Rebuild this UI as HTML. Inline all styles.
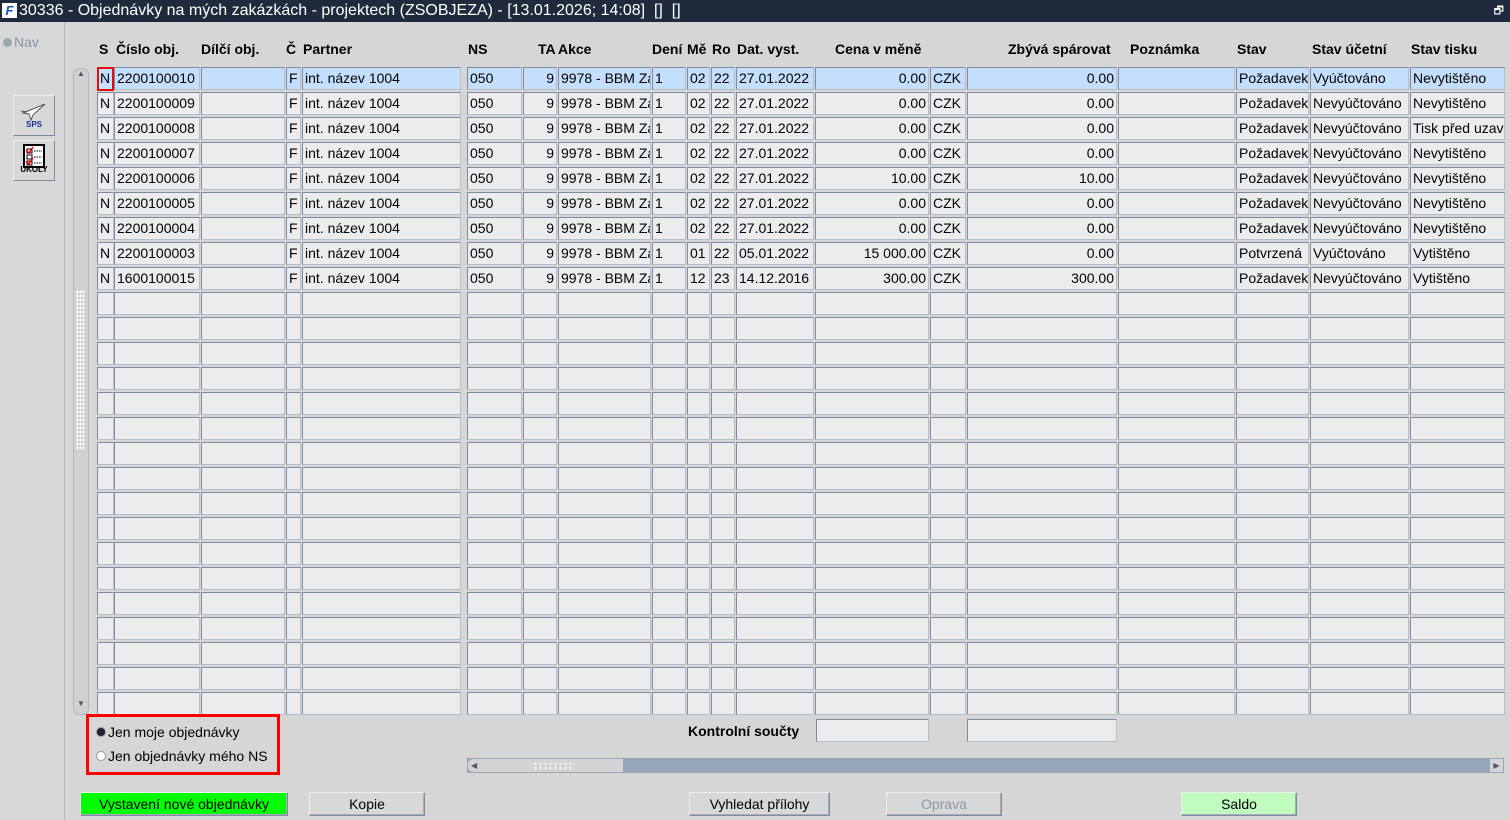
<!DOCTYPE html>
<html><head><meta charset="utf-8"><style>
*{box-sizing:border-box;margin:0;padding:0}
body{width:1510px;height:820px;overflow:hidden;background:#d6d6d6;font-family:"Liberation Sans",Arial,sans-serif;font-size:14px;color:#000;position:relative}
.abs{position:absolute}
#title{left:0;top:0;width:1510px;height:22px;background:#1f2b3c;color:#fff;font-size:16px;line-height:22px;padding-left:19px;white-space:nowrap}
#left{left:0;top:22px;width:65px;height:798px;background:#d8d8d8;border-right:1px solid #b8b8b8}
.c{position:absolute;height:23px;background:#ececec;border:1px solid;border-color:#7d8ca2 #b4bfcd #b4bfcd #7d8ca2;line-height:21px;padding:0 2px;white-space:nowrap;overflow:hidden;font-size:14px}
.sel{background:#c3dffb}
.r{text-align:right}
.h{position:absolute;top:41px;font-weight:bold;font-size:14px;white-space:nowrap}
.btn{position:absolute;top:792px;height:24px;border:1px solid;border-color:#eee #7d8ca2 #7d8ca2 #eee;background:#d8d8d8;text-align:center;line-height:22px;font-size:14px;box-shadow:inset -1px -1px 0 #aab}
</style></head><body>
<div id="title" class="abs">30336 - Objednávky na mých zakázkách - projektech (ZSOBJEZA) - [13.01.2026; 14:08]&nbsp; []&nbsp; []</div>
<div class="abs" style="left:2px;top:3px;width:15px;height:15px;background:#fff;color:#1553c8;font-weight:bold;font-size:13px;line-height:15px;text-align:center;font-style:italic">F</div>
<div class="abs" style="right:6px;top:2px;color:#fff;font-size:11px">🗗</div>
<div id="left" class="abs"></div>
<div class="abs" style="left:3px;top:34px;color:#8a94a6;font-size:14px"><span style="display:inline-block;width:9px;height:9px;border-radius:50%;background:#9aa;margin-right:2px"></span>Nav</div>
<div class="abs" style="left:13px;top:95px;width:42px;height:41px;border:1px solid;border-color:#eee #7d8ca2 #7d8ca2 #eee;text-align:center">
<svg width="30" height="20" viewBox="0 0 30 20" style="margin-top:5px"><path d="M4 12 L26 3 L14 14 L12 19 L10 13 Z" fill="#fff" stroke="#555"/><path d="M2 10 L8 11" stroke="#555"/></svg>
<div style="font-size:8px;color:#1a2a9a;font-weight:bold;margin-top:-4px">SPS</div></div>
<div class="abs" style="left:13px;top:140px;width:42px;height:41px;border:1px solid;border-color:#eee #7d8ca2 #7d8ca2 #eee;text-align:center">
<svg width="22" height="24" viewBox="0 0 22 24" style="margin-top:3px"><rect x="1" y="1" width="20" height="22" fill="#fff" stroke="#000" stroke-width="2"/><rect x="4" y="5" width="5" height="4" fill="none" stroke="#000"/><rect x="4" y="11" width="5" height="4" fill="none" stroke="#000"/><rect x="4" y="17" width="5" height="4" fill="none" stroke="#000"/><path d="M3 6 L6 9 L10 3 M3 17 L6 20 L10 14" stroke="#e00" fill="none" stroke-width="1.5"/><path d="M11 7h8M11 13h8M11 19h8" stroke="#000" stroke-dasharray="1.5 1"/></svg>
<div style="font-size:8px;font-weight:bold;margin-top:-6px">ÚKOLY</div></div>
<!-- vertical scrollbar -->
<div class="abs" style="left:73px;top:68px;width:16px;height:647px;background:#d0d0d0;border:1px solid #b0b8c4;border-radius:6px"></div>
<div class="abs" style="left:74px;top:69px;width:14px;height:14px;font-size:8px;color:#556;text-align:center">▲</div>
<div class="abs" style="left:74px;top:699px;width:14px;height:14px;font-size:8px;color:#556;text-align:center">▼</div>
<div class="abs" style="left:76px;top:290px;width:9px;height:160px;background-image:radial-gradient(#fff 1px,transparent 1.2px);background-size:3px 4px"></div>
<div class="h" style="left:99px">S</div><div class="h" style="left:116px">Číslo obj.</div><div class="h" style="left:201px">Dílčí obj.</div><div class="h" style="left:286px">Č</div><div class="h" style="left:303px">Partner</div><div class="h" style="left:468px">NS</div><div class="h" style="left:538px">TA</div><div class="h" style="left:558px">Akce</div><div class="h" style="left:652px">Dení</div><div class="h" style="left:687px">Mě</div><div class="h" style="left:712px">Ro</div><div class="h" style="left:737px">Dat. vyst.</div><div class="h" style="left:835px">Cena v měně</div><div class="h" style="left:1008px">Zbývá spárovat</div><div class="h" style="left:1130px">Poznámka</div><div class="h" style="left:1237px">Stav</div><div class="h" style="left:1312px">Stav účetní</div><div class="h" style="left:1411px">Stav tisku</div>
<div id="g"></div>
<div class="abs" style="left:97px;top:67px;width:17px;height:24px;border:2px solid #e01010"></div>
<div class="abs" style="left:86px;top:714px;width:194px;height:61px;border:3px solid #f00"></div>
<div class="abs" style="left:96px;top:724px;font-size:14px"><span style="display:inline-block;width:10px;height:10px;border-radius:50%;background:#223;border:1px solid #999;margin-right:2px"></span>Jen moje objednávky</div>
<div class="abs" style="left:96px;top:748px;font-size:14px"><span style="display:inline-block;width:10px;height:10px;border-radius:50%;background:#fff;border:1px solid #999;margin-right:2px"></span>Jen objednávky mého NS</div>
<div class="abs" style="left:688px;top:723px;font-weight:bold">Kontrolní součty</div>
<div class="c" style="left:816px;top:719px;width:113px"></div>
<div class="c" style="left:967px;top:719px;width:150px"></div>
<div class="abs" style="left:467px;top:758px;width:1037px;height:15px;background:#97a5b8"></div>
<div class="abs" style="left:468px;top:759px;width:155px;height:13px;background:#d4d4d4;border-radius:5px 0 0 5px;font-size:8px;color:#556;padding-left:3px;line-height:13px">◀</div>
<div class="abs" style="left:533px;top:762px;width:42px;height:7px;background-image:radial-gradient(#fff 1px,transparent 1.2px);background-size:5px 4px"></div>
<div class="abs" style="left:1490px;top:759px;width:13px;height:13px;background:#d4d4d4;font-size:8px;color:#556;text-align:center;line-height:13px">▶</div>
<div class="btn" style="left:80px;width:208px;background:#00ff00">Vystavení nové objednávky</div>
<div class="btn" style="left:309px;width:116px">Kopie</div>
<div class="btn" style="left:689px;width:141px">Vyhledat přílohy</div>
<div class="btn" style="left:886px;width:116px;color:#8d97a5">Oprava</div>
<div class="btn" style="left:1181px;width:116px;background:#c0fcc0">Saldo</div>
<script>
var cols=[[97,17],[114,86],[201,84],[286,15],[302,159],[467,55],[523,34],[558,93],[652,34],[687,23],[711,24],[736,78],[815,114],[930,36],[967,150],[1118,117],[1236,73],[1310,99],[1410,95]];
var right={6:1,12:1,14:1};
var d=[
["N","2200100010","","F","int. název 1004","050","9","9978 - BBM Za","1","02","22","27.01.2022","0.00","CZK","0.00","","Požadavek","Vyúčtováno","Nevytištěno"],
["N","2200100009","","F","int. název 1004","050","9","9978 - BBM Za","1","02","22","27.01.2022","0.00","CZK","0.00","","Požadavek","Nevyúčtováno","Nevytištěno"],
["N","2200100008","","F","int. název 1004","050","9","9978 - BBM Za","1","02","22","27.01.2022","0.00","CZK","0.00","","Požadavek","Nevyúčtováno","Tisk před uzavřením"],
["N","2200100007","","F","int. název 1004","050","9","9978 - BBM Za","1","02","22","27.01.2022","0.00","CZK","0.00","","Požadavek","Nevyúčtováno","Nevytištěno"],
["N","2200100006","","F","int. název 1004","050","9","9978 - BBM Za","1","02","22","27.01.2022","10.00","CZK","10.00","","Požadavek","Nevyúčtováno","Nevytištěno"],
["N","2200100005","","F","int. název 1004","050","9","9978 - BBM Za","1","02","22","27.01.2022","0.00","CZK","0.00","","Požadavek","Nevyúčtováno","Nevytištěno"],
["N","2200100004","","F","int. název 1004","050","9","9978 - BBM Za","1","02","22","27.01.2022","0.00","CZK","0.00","","Požadavek","Nevyúčtováno","Nevytištěno"],
["N","2200100003","","F","int. název 1004","050","9","9978 - BBM Za","1","01","22","05.01.2022","15 000.00","CZK","0.00","","Potvrzená","Vyúčtováno","Vytištěno"],
["N","1600100015","","F","int. název 1004","050","9","9978 - BBM Za","1","12","23","14.12.2016","300.00","CZK","300.00","","Požadavek","Nevyúčtováno","Vytištěno"]];
var h="";
for(var r=0;r<26;r++){var y=67+r*25;for(var i=0;i<cols.length;i++){var t=(d[r]||[])[i]||"";h+='<div class="c'+(r==0?' sel':'')+(right[i]?' r':'')+'" style="left:'+cols[i][0]+'px;top:'+y+'px;width:'+cols[i][1]+'px">'+t+'</div>';}}
document.getElementById("g").innerHTML=h;
</script>
</body></html>
